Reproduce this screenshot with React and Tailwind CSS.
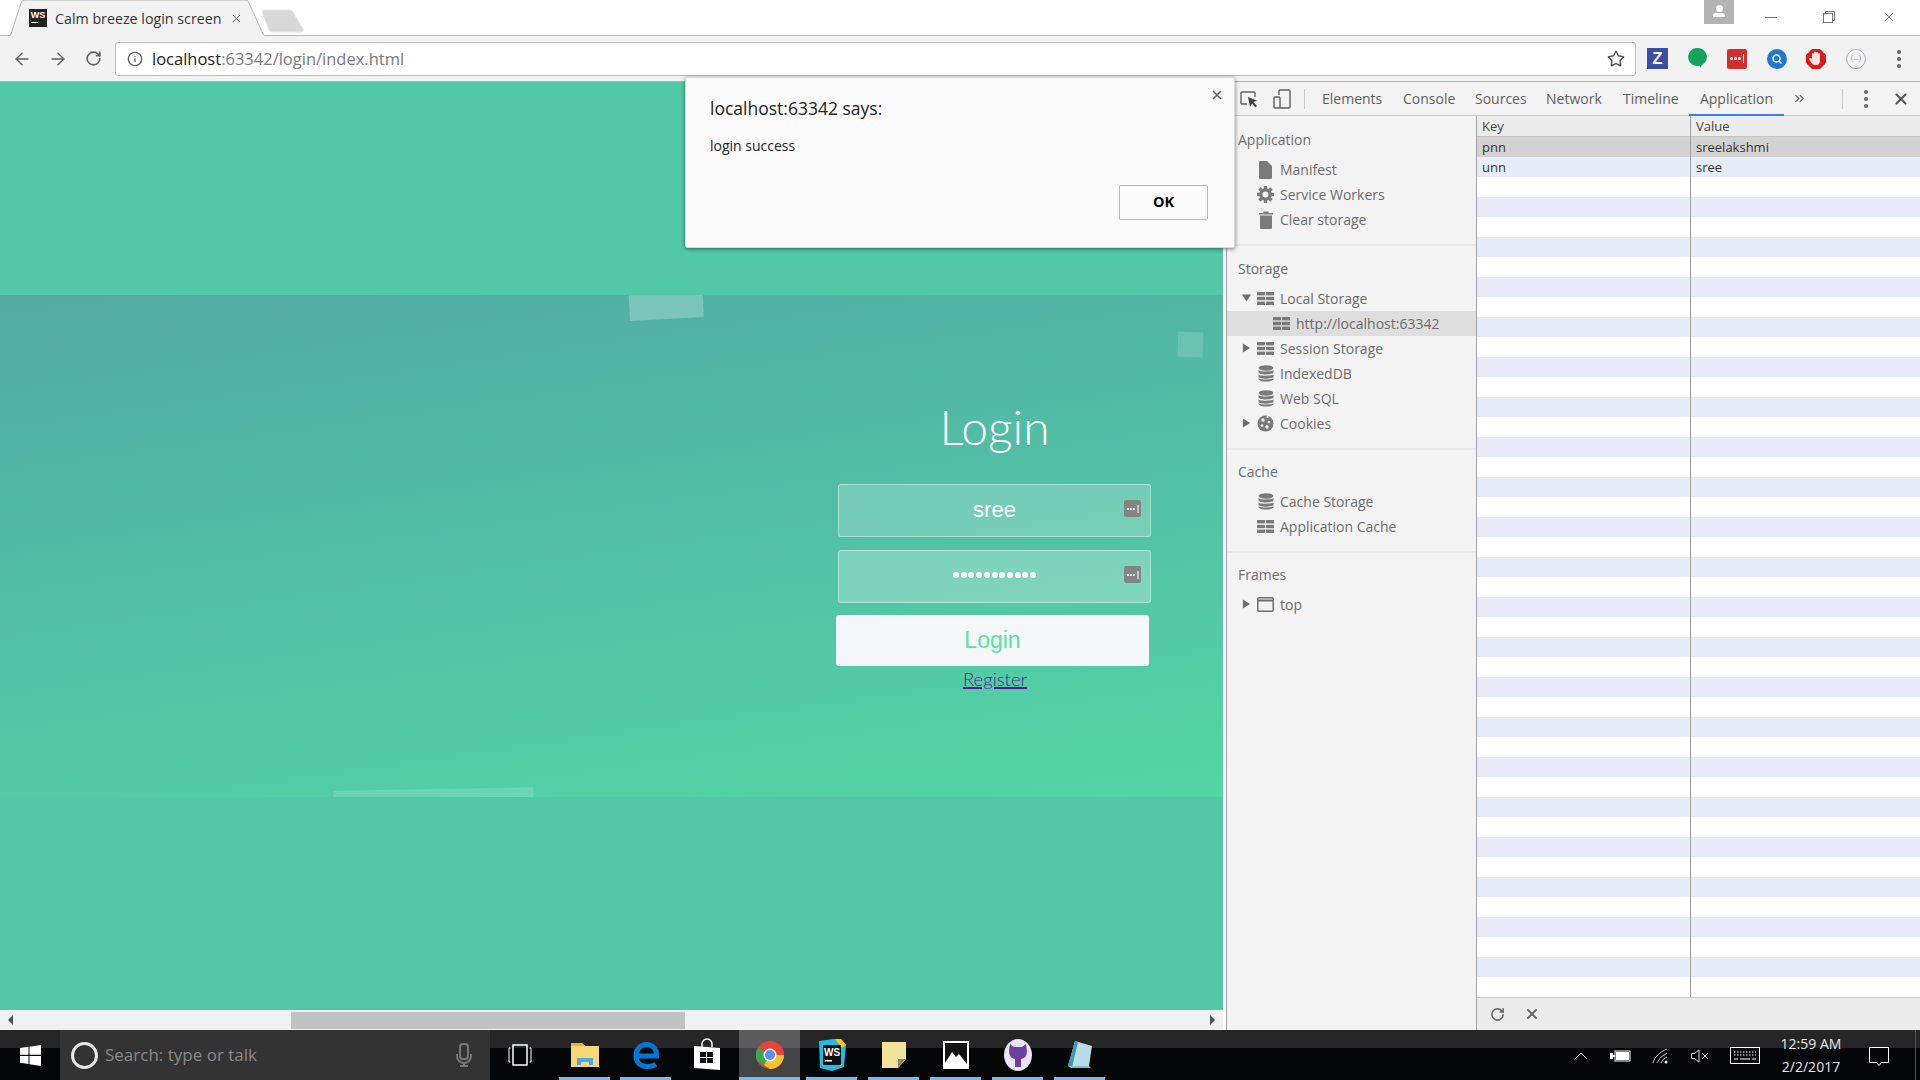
import { ArrowLeft, ArrowRight, RotateCw, Info, Star, X, ChevronsRight, ChevronUp } from "lucide-react";

const Tri = ({ open }) => (
  <svg width="9" height="10" viewBox="0 0 10 10" className="absolute left-[15px] top-[7px]">
    {open ? <path d="M0 1h10L5 9z" fill="#6e6e6e" /> : <path d="M1 0l8 5-8 5z" fill="#6e6e6e" />}
  </svg>
);

const GridIcon = () => (
  <svg width="17" height="13" viewBox="0 0 17 13" fill="#7a7a7a">
    <rect x="0" y="0" width="8" height="3.4" />
    <rect x="9" y="0" width="8" height="3.4" />
    <rect x="0" y="4.8" width="8" height="3.4" />
    <rect x="9" y="4.8" width="8" height="3.4" />
    <rect x="0" y="9.6" width="8" height="3.4" />
    <rect x="9" y="9.6" width="8" height="3.4" />
  </svg>
);

const DbIcon = () => (
  <svg width="16" height="17" viewBox="0 0 16 17" fill="#7a7a7a">
    <ellipse cx="8" cy="3" rx="7.5" ry="2.8" />
    <path d="M.5 5c1 2 14 2 15 0v2.2c0 3-15 3-15 0zM.5 9.2c1 2 14 2 15 0v2.2c0 3-15 3-15 0zM.5 13c1 2 14 2 15 0v1c0 3.400-15 3.400-15 0z" />
  </svg>
);

const DocIcon = () => (
  <svg width="13" height="18" viewBox="0 0 13 18" fill="#7a7a7a">
    <path d="M0 1a1 1 0 011-1h7l5 5v12a1 1 0 01-1 1H1a1 1 0 01-1-1z" />
  </svg>
);

const GearIcon = () => (
  <svg width="17" height="17" viewBox="0 0 17 17">
    <circle cx="8.500" cy="8.500" r="4.600" fill="none" stroke="#7a7a7a" strokeWidth="3.200" />
    <g stroke="#7a7a7a" strokeWidth="3.400">
      <path d="M8.500 0v3M8.500 14v3M0 8.500h3M14 8.500h3M2.500 2.500l2 2M12.500 12.500l2 2M14.500 2.500l-2 2M4.500 12.500l-2 2" />
    </g>
  </svg>
);

const TrashIcon = () => (
  <svg width="14" height="18" viewBox="0 0 14 18" fill="#7a7a7a">
    <path d="M0 2h4.500V.5h5V2H14v1.500H0zM1 4.500h12V17a1 1 0 01-1 1H2a1 1 0 01-1-1z" />
  </svg>
);

const CookieIcon = () => (
  <svg width="17" height="17" viewBox="0 0 17 17">
    <circle cx="8.500" cy="8.500" r="8" fill="#7a7a7a" />
    <g fill="#f3f3f3">
      <circle cx="6" cy="5" r="1.700" />
      <circle cx="12" cy="7" r="1.300" />
      <circle cx="5" cy="10.500" r="1.300" />
      <circle cx="10" cy="12" r="1.700" />
      <circle cx="10.500" cy="2" r="1.100" />
    </g>
  </svg>
);

const FrameIcon = () => (
  <svg width="17" height="15" viewBox="0 0 17 15" fill="none" stroke="#6e6e6e" strokeWidth="1.500">
    <rect x=".8" y=".8" width="15.400" height="13.400" rx="1" />
    <path d="M.8 3.500h15.400" strokeWidth="2" />
  </svg>
);

const KeyIcon = () => (
  <div className="absolute right-[9px] top-[15px] w-[17px] h-[17px] rounded-[2px] bg-[#848484] flex items-center justify-center">
    <svg width="14" height="10" viewBox="0 0 14 10" fill="#fff">
      <circle cx="2" cy="5" r="1" />
      <circle cx="5" cy="5" r="1" />
      <circle cx="8" cy="5" r="1" />
      <rect x="11.500" y="1" width="1" height="8" />
    </svg>
  </div>
);

const sideGroups = [
  {
    title: "Application",
    spacing: "border-b-2 border-[#e8e8e8] pb-[12px] mb-[10px]",
    items: [
      { icon: <DocIcon />, label: "Manifest" },
      { icon: <GearIcon />, label: "Service Workers" },
      { icon: <TrashIcon />, label: "Clear storage" },
    ],
  },
  {
    title: "Storage",
    spacing: "border-b-2 border-[#e8e8e8] pb-[12px] mb-[9px]",
    items: [
      { icon: <GridIcon />, label: "Local Storage", tri: "open" },
      { icon: <GridIcon />, label: "http://localhost:63342", active: true },
      { icon: <GridIcon />, label: "Session Storage", tri: "closed" },
      { icon: <DbIcon />, label: "IndexedDB" },
      { icon: <DbIcon />, label: "Web SQL" },
      { icon: <CookieIcon />, label: "Cookies", tri: "closed" },
    ],
  },
  {
    title: "Cache",
    spacing: "border-b-2 border-[#e8e8e8] pb-[12px] mb-[9px]",
    items: [
      { icon: <DbIcon />, label: "Cache Storage" },
      { icon: <GridIcon />, label: "Application Cache" },
    ],
  },
  {
    title: "Frames",
    spacing: "",
    items: [{ icon: <FrameIcon />, label: "top", tri: "closed" }],
  },
];

const devTabs = [
  { label: "Elements", width: "w-[81px]" },
  { label: "Console", width: "w-[72px]" },
  { label: "Sources", width: "w-[71px]" },
  { label: "Network", width: "w-[77px]" },
  { label: "Timeline", width: "w-[66px]" },
];

const storageRows = Array.from({ length: 43 }, (_, i) => i);

const SideRow = ({ item }) => (
  <div
    className={
      item.active
        ? "relative h-[25px] flex items-center pl-[46px] bg-[#dedede]"
        : "relative h-[25px] flex items-center pl-[30px]"
    }
  >
    {item.tri === "open" && <Tri open />}
    {item.tri === "closed" && <Tri />}
    <span className="w-[17px] flex justify-center shrink-0">{item.icon}</span>
    <span className="ml-[6px] text-[14px] text-[#6b6b6b] whitespace-nowrap">{item.label}</span>
  </div>
);

const Sidebar = () => (
  <div className="w-[250px] shrink-0 bg-[#f3f3f3] border-r border-[#a3a3a3] flex flex-col pt-[11px]">
    {sideGroups.map((g) => (
      <div key={g.title} className={g.spacing}>
        <div className="h-[25px] flex items-center pl-[11px] text-[14px] text-[#6b6b6b]">{g.title}</div>
        <div className="mt-[5px]">
          {g.items.map((item) => (
            <SideRow key={item.label} item={item} />
          ))}
        </div>
      </div>
    ))}
  </div>
);

const StorageTable = () => (
  <div className="flex-1 flex flex-col min-w-0">
    <div className="flex-1 overflow-hidden flex flex-col relative">
      <div className="h-[21px] shrink-0 bg-[#ececec] border-b border-[#c4c4c4] flex text-[13px] text-[#444]">
        <div className="w-[213px] pl-[5px] pt-[1px] flex items-center">Key</div>
        <div className="pl-[6px] pt-[1px] flex items-center">Value</div>
      </div>
      {storageRows.map((i) => (
        <div
          key={i}
          className={
            i === 0
              ? "h-[20px] shrink-0 bg-[#d3d3d3] flex text-[13px] text-[#333]"
              : i % 2 === 1
                ? "h-[20px] shrink-0 bg-[#e6edf8] flex text-[13px] text-[#333]"
                : "h-[20px] shrink-0 bg-white flex text-[13px] text-[#333]"
          }
        >
          <div className="w-[213px] pl-[5px] pt-[1px] flex items-center">{i === 0 ? "pnn" : i === 1 ? "unn" : ""}</div>
          <div className="pl-[6px] pt-[1px] flex items-center">{i === 0 ? "sreelakshmi" : i === 1 ? "sree" : ""}</div>
        </div>
      ))}
      <div className="absolute left-[213px] top-0 bottom-0 w-px bg-[#9c9c9c]" />
    </div>
    <div className="h-[33px] shrink-0 bg-[#ececec] border-t border-[#c8c8c8] flex items-center pl-[13px] gap-[19px] text-[#666]">
      <RotateCw size={15} strokeWidth={2.500} />
      <X size={16} strokeWidth={2.800} />
    </div>
  </div>
);

const DevTools = () => (
  <div className="w-[695px] shrink-0 ml-[3px] flex flex-col border-l border-[#a3a3a3] bg-white">
    <div className="h-[34px] shrink-0 bg-[#f3f3f3] border-b border-[#c8c8c8] flex items-center relative text-[14px] text-[#5f5f5f]">
      <svg width="18" height="18" viewBox="0 0 18 18" fill="none" className="ml-[13px]">
        <path d="M7 14H2a1 1 0 01-1-1V3a1 1 0 011-1h12a1 1 0 011 1v4" stroke="#5f5f5f" strokeWidth="1.400" />
        <path d="M8 7l9 3.500-3.500 1.500L17 16l-1.500 1.500L12 13.500 10 17z" fill="#444" />
      </svg>
      <svg width="18" height="20" viewBox="0 0 18 20" fill="none" stroke="#5f5f5f" strokeWidth="1.400" className="ml-[15px]">
        <path d="M6 6V2a1 1 0 011-1h9a1 1 0 011 1v16a1 1 0 01-1 1H7" />
        <rect x="1" y="8" width="6" height="11" rx="1" />
      </svg>
      <div className="w-px h-[20px] bg-[#c8c8c8] ml-[13px]" />
      <div className="ml-[17px] flex items-center h-full">
        {devTabs.map((t) => (
          <span key={t.label} className={t.width + " whitespace-nowrap"}>{t.label}</span>
        ))}
        <span className="relative w-[95px] h-full flex items-center justify-center whitespace-nowrap">
          Application
          <span className="absolute left-0 right-0 bottom-[-1px] h-[2px] bg-[#3b80ee]" />
        </span>
      </div>
      <ChevronsRight size={15} strokeWidth={2.200} className="ml-[8px] text-[#666]" />
      <div className="w-px h-[20px] bg-[#c8c8c8] ml-[35px]" />
      <div className="ml-[21px] flex flex-col gap-[3px]">
        <span className="w-[4px] h-[4px] rounded-full bg-[#666]" />
        <span className="w-[4px] h-[4px] rounded-full bg-[#666]" />
        <span className="w-[4px] h-[4px] rounded-full bg-[#666]" />
      </div>
      <X size={18} strokeWidth={2.800} className="ml-[24px] text-[#555]" />
    </div>
    <div className="flex-1 flex min-h-0">
      <Sidebar />
      <StorageTable />
    </div>
  </div>
);

const LoginForm = () => (
  <div className="ml-[836px] w-[316px] flex flex-col pt-[99px]">
    <h1 className="h-[66px] text-center pl-[1px] text-[48px] leading-[66px] font-light text-white font-['Lato',sans-serif]">Login</h1>
    <div className="mt-[24px] ml-[2px] relative w-[313px] h-[53px] rounded-[3px] border border-white/40 bg-white/20 flex items-center justify-center pb-[2px] text-[22px] text-white font-['Liberation_Sans',sans-serif]">
      sree
      <KeyIcon />
    </div>
    <div className="mt-[13px] ml-[2px] relative w-[313px] h-[53px] rounded-[3px] border border-white/40 bg-white/25 flex items-center justify-center gap-[1.700px] pb-[3px]">
      {Array.from({ length: 11 }, (_, i) => (
        <span key={i} className="w-[6px] h-[6px] rounded-full bg-white" />
      ))}
      <KeyIcon />
    </div>
    <div className="mt-[12px] w-[313px] h-[51px] rounded-[3px] bg-[#f5f7f9] flex items-center justify-center text-[23px] text-[#53e3a6] font-['Liberation_Sans',sans-serif]">Login</div>
    <div className="pl-[2px] text-center text-[18.500px] leading-[26px] font-light font-['Lato',sans-serif]">
      <a className="text-[#551a8b] underline decoration-2">Register</a>
    </div>
  </div>
);

const Page = () => (
  <div className="w-[1223px] shrink-0 flex flex-col">
    <div className="h-[213px] shrink-0 bg-[#52c9a6]" />
    <div className="h-[502px] shrink-0 relative overflow-hidden bg-[linear-gradient(172deg,#51aaa4,#53d6a4)]">
      <div className="absolute left-[628px] top-[-50px] w-[74px] h-[74px] bg-white/25 -rotate-3" />
      <div className="absolute left-[1178px] top-[37px] w-[25px] h-[25px] bg-white/15 rotate-2" />
      <div className="absolute left-[335px] top-[494px] w-[200px] h-[200px] bg-white/15 -rotate-1" />
      <LoginForm />
    </div>
    <div className="flex-1 bg-[#52c9a6]" />
    <div className="h-[20px] shrink-0 bg-[#f1f1f1] flex items-center relative">
      <svg width="6" height="10" viewBox="0 0 6 10" className="absolute left-[8px] top-[5px]">
        <path d="M5 0v10L0 5z" fill="#505050" />
      </svg>
      <div className="absolute left-[291px] w-[394px] top-[2px] bottom-[1px] bg-[#c1c1c1]" />
      <svg width="6" height="10" viewBox="0 0 6 10" className="absolute right-[8px] top-[5px]">
        <path d="M1 0v10l5-5z" fill="#505050" />
      </svg>
    </div>
  </div>
);

const Dialog = () => (
  <div className="absolute left-[685px] top-[77px] w-[550px] h-[171px] bg-[#fbfbfb] rounded-[2px] shadow-[0_1px_4px_rgba(0,0,0,0.5)] border border-[#d8d8d8] z-10 font-['Open_Sans',sans-serif]">
    <X size={14} strokeWidth={2.800} className="absolute right-[10px] top-[10px] text-[#666]" />
    <div className="pl-[24px] pt-[18px] text-[17.500px] leading-[24px] text-[#222]">localhost:63342 says:</div>
    <div className="pl-[24px] pt-[16px] text-[14px] leading-[20px] text-[#222]">login success</div>
    <div className="absolute left-[433px] top-[107px] w-[89px] h-[35px] bg-[#fbfbfb] border border-[#a3b8e8] rounded-[1px] flex items-center justify-center pb-[1px] text-[14.500px] font-bold text-black">OK</div>
  </div>
);

const TabStrip = () => (
  <div className="h-[36px] shrink-0 bg-white flex relative border-b border-[#b5b5b5]">
    <div className="relative w-[262px] h-[36px] ml-[6px] flex items-center shrink-0">
      <svg width="262" height="36" viewBox="0 0 262 36" className="absolute inset-0">
        <path d="M2 36h1q1 0 2-2L15 3q1-3 4-3h220q3 0 4 3l14 31q1 2 3 2h2" fill="#f2f2f2" stroke="#b5b5b5" />
      </svg>
      <div className="relative ml-[23px] w-[18px] h-[18px] bg-[#222] flex flex-col items-center pt-[1px]">
        <span className="text-[9px] leading-[10px] font-bold text-white font-['Liberation_Sans',sans-serif]">WS</span>
        <span className="self-start ml-[2px] mt-[2px] w-[7px] h-[1px] bg-white" />
      </div>
      <span className="relative ml-[8px] pt-[1px] text-[14.250px] text-[#333] whitespace-nowrap">Calm breeze login screen</span>
      <X size={13} strokeWidth={1.800} className="relative ml-[9px] text-[#555]" />
    </div>
    <svg width="44" height="24" viewBox="0 0 44 24" className="mt-[9px] -ml-[7px]">
      <path d="M1 3q0-2 2-2h26q2 0 3 2l10 17q1 3-2 3H11q-2 0-3-2z" fill="#d8d8d8" stroke="#e6e6e6" />
    </svg>
    <div className="absolute left-[1704px] top-0 w-[30px] h-[24px] bg-[#b3b3b3] flex flex-col items-center pt-[5px]">
      <span className="w-[7px] h-[7px] rounded-full bg-white" />
      <span className="w-[12px] h-[4px] rounded-t-[3px] bg-white mt-[1px]" />
    </div>
    <div className="ml-auto flex items-center h-[34px] text-[#888] mr-[23px] gap-[46px]">
      <span className="w-[12px] h-px bg-[#777]" />
      <svg width="12" height="12" viewBox="0 0 12 12" fill="none" stroke="#777">
        <rect x=".5" y="2.500" width="9" height="9" />
        <path d="M2.500 2.500V.5h9v9h-2" />
      </svg>
      <X size={16} strokeWidth={1} className="text-[#555]" />
    </div>
  </div>
);

const Extensions = () => (
  <div className="flex items-center ml-[11px]">
    <div className="w-[21px] h-[21px] bg-[#3b4ea0] flex items-center justify-center text-white font-bold text-[17px] leading-none font-['Liberation_Sans',sans-serif]">Z</div>
    <svg width="20" height="22" viewBox="0 0 20 22" className="ml-[20px]">
      <path d="M10 0a9 9 0 014 17l-2 3v-2.500A9 9 0 1110 0z" fill="#12a35d" />
    </svg>
    <div className="ml-[19px] w-[20px] h-[20px] rounded-[2px] bg-[#d32d2d] flex items-center justify-center gap-[1px]">
      <span className="w-[3px] h-[3px] rounded-full bg-white" />
      <span className="w-[3px] h-[3px] rounded-full bg-white" />
      <span className="w-[3px] h-[3px] rounded-full bg-white" />
      <span className="w-px h-[9px] bg-white ml-[1px]" />
    </div>
    <svg width="20" height="20" viewBox="0 0 20 20" className="ml-[20px]">
      <circle cx="10" cy="10" r="10" fill="#1f78d1" />
      <circle cx="9.500" cy="9.500" r="3.500" fill="none" stroke="#fff" strokeWidth="1.500" />
      <path d="M12 12l2.500 2.500" stroke="#fff" strokeWidth="1.500" />
    </svg>
    <svg width="20" height="20" viewBox="0 0 20 20" className="ml-[19px]">
      <path d="M6 0h8l6 6v8l-6 6H6l-6-6V6z" fill="#e01b1b" />
      <path d="M6 10V5a1 1 0 012 0V3.500a1 1 0 012 0V4a1 1 0 012 0v1a1 1 0 012 0v7q0 4-4 4t-5-3l-2-3q0-1.500 2-1z" fill="#f3e9e4" />
    </svg>
    <div className="ml-[20px] w-[20px] h-[20px] rounded-full border border-[#aaa] flex items-center justify-center text-[7px] text-[#999]">{"{...}"}</div>
    <div className="ml-[31px] flex flex-col gap-[3px]">
      <span className="w-[4px] h-[4px] rounded-full bg-[#666]" />
      <span className="w-[4px] h-[4px] rounded-full bg-[#666]" />
      <span className="w-[4px] h-[4px] rounded-full bg-[#666]" />
    </div>
  </div>
);

const Toolbar = () => (
  <div className="h-[46px] shrink-0 bg-[#f2f2f2] border-b border-[#b5b5b5] flex items-center">
    <ArrowLeft size={20} strokeWidth={1.800} className="ml-[12px] text-[#5f5f5f]" />
    <ArrowRight size={20} strokeWidth={1.800} className="ml-[16px] text-[#5f5f5f]" />
    <RotateCw size={17} strokeWidth={2.200} className="ml-[17px] text-[#5f5f5f]" />
    <div className="ml-[13px] w-[1521px] h-[34px] bg-white border border-[#bcbcbc] rounded-[3px] flex items-center pl-[11px] pr-[10px]">
      <Info size={16} strokeWidth={2} className="text-[#5f5f5f]" />
      <span className="ml-[9px] pt-[1px] text-[16.500px] text-[#222] whitespace-nowrap">
        localhost<span className="text-[#7a7a7a]">:63342/login/index.html</span>
      </span>
      <Star size={18} strokeWidth={2} className="ml-auto text-[#555]" />
    </div>
    <Extensions />
  </div>
);

const TaskIcon = ({ children, className }) => (
  <div className={"relative h-full flex items-center justify-center shrink-0 " + className}>
    {children}
    <span className="absolute left-0 right-0 bottom-0 h-[3px] bg-[#76b9ed]" />
  </div>
);

const Taskbar = () => (
  <div className="h-[50px] shrink-0 bg-[linear-gradient(#262626_0,#262626_18px,#050608_18px)] flex items-center text-white">
    <div className="w-[60px] h-full flex items-center justify-center">
      <svg width="21" height="21" viewBox="0 0 21 21" fill="#fff">
        <path d="M0 3l8.500-1.200v8H0zM9.500 1.700L21 0v9.800H9.500zM0 11h8.500v8L0 17.800zM9.500 11H21v10l-11.500-1.700z" />
      </svg>
    </div>
    <div className="w-[430px] h-full bg-[#333] flex items-center shrink-0">
      <span className="ml-[11px] w-[27px] h-[27px] rounded-full border-[3px] border-[#e6e6e6]" />
      <span className="ml-[7px] text-[17px] text-[#8a8a8a] whitespace-nowrap">Search: type or talk</span>
      <svg width="16" height="24" viewBox="0 0 16 24" fill="none" stroke="#777" strokeWidth="2" className="ml-auto mr-[18px]">
        <rect x="4" y="1" width="8" height="15" rx="3" />
        <path d="M1 11v2a7 7 0 0014 0v-2M8 20v3M4 23h8" />
      </svg>
    </div>
    <div className="w-[60px] flex items-center justify-center">
      <svg width="24" height="22" viewBox="0 0 24 22" fill="none" stroke="#fff" strokeWidth="1.500">
        <rect x="5" y="1" width="14" height="20" />
        <path d="M2.500 4H1v14h1.500M21.500 4H23v14h-1.500" strokeWidth="1" />
      </svg>
    </div>
    <TaskIcon className="w-[51px] ml-[9px]">
      <svg width="30" height="28" viewBox="0 0 30 28">
        <path d="M1 2h11l3 3h14v21H1z" fill="#f8d775" />
        <path d="M1 2h11l3 3H1z" fill="#e2b342" />
        <path d="M7 24v-7h16v7h-4v-3h-8v3z" fill="#4aa8e8" />
      </svg>
    </TaskIcon>
    <TaskIcon className="w-[51px] ml-[10px]">
      <svg width="26" height="27" viewBox="0 0 26 27" fill="none" stroke="#0078d7" strokeWidth="5">
        <path d="M3 14h20.500c.5-7-4-11.500-10-11.500C7 2.500 2.500 8 3 15c.5 6 5 9.500 11 9.500 3 0 6-.5 9-2" />
      </svg>
    </TaskIcon>
    <div className="w-[68px] h-full flex items-center justify-center shrink-0 pl-[4px]">
      <svg width="26" height="34" viewBox="0 0 26 34">
        <path d="M8 9V6a5 5 0 0110 0v3" fill="none" stroke="#fff" strokeWidth="1.500" />
        <path d="M0 8l26 2v22L0 30z" fill="#fff" />
        <path d="M6 14h6v5H6zM13 14h6v5h-6zM6 20h6v5H6zM13 20h6v5h-6z" fill="#111" />
      </svg>
    </div>
    <TaskIcon className="w-[61px] bg-white/25">
      <svg width="28" height="28" viewBox="0 0 28 28">
        <circle cx="14" cy="14" r="14" fill="#ea4335" />
        <path d="M14 14L2 7a14 14 0 00-1 13l13 8z" fill="#34a853" />
        <path d="M14 14h14a14 14 0 01-14 14l-6-4z" fill="#fbc02d" />
        <circle cx="14" cy="14" r="6.500" fill="#fff" />
        <circle cx="14" cy="14" r="5" fill="#5a8fe8" />
      </svg>
    </TaskIcon>
    <TaskIcon className="w-[51px] ml-[6px]">
      <svg width="30" height="34" viewBox="0 0 30 34">
        <path d="M2 3l14-2 8 0 5 6-2 22-12 4-12-3z" fill="#21bde0" />
        <path d="M18 1l6 0 5 6-4 3z" fill="#f5c518" />
        <rect x="6" y="7" width="18" height="20" fill="#111" />
        <text x="15" y="18" textAnchor="middle" fontSize="10" fontWeight="700" fill="#fff" fontFamily="Liberation Sans">WS</text>
        <rect x="8" y="22" width="7" height="1.500" fill="#fff" />
      </svg>
    </TaskIcon>
    <TaskIcon className="w-[51px] ml-[11px]">
      <svg width="24" height="26" viewBox="0 0 24 26">
        <path d="M0 0h24v17l-8 9H0z" fill="#f2e39b" />
        <path d="M24 17h-8v9z" fill="#8f8760" />
      </svg>
    </TaskIcon>
    <TaskIcon className="w-[51px] ml-[11px]">
      <svg width="26" height="28" viewBox="0 0 26 28">
        <rect x="1" y="1" width="24" height="26" fill="#111" stroke="#fff" strokeWidth="2" />
        <path d="M2 22l7-11 4 5 3-3 8 10v4H2z" fill="#fff" />
      </svg>
    </TaskIcon>
    <TaskIcon className="w-[51px] ml-[11px]">
      <svg width="28" height="32" viewBox="0 0 28 32">
        <ellipse cx="14" cy="16" rx="14" ry="16" fill="#e9e5f3" />
        <path d="M6 5l4 3h8l4-3 1 7q0 7-6 8v8h-6v-8q-6-1-6-8z" fill="#6a3fa0" />
      </svg>
    </TaskIcon>
    <TaskIcon className="w-[51px] ml-[11px]">
      <svg width="28" height="32" viewBox="0 0 28 32">
        <path d="M9 2l17 5-3 20H2z" fill="#b9dde6" />
        <path d="M2 27l7-25 3 1-6 25z" fill="#3f98ad" />
        <path d="M2 27h21l2 2H5z" fill="#7bbfcc" />
      </svg>
    </TaskIcon>
    <div className="ml-auto flex items-center h-full relative">
      <ChevronUp size={24} strokeWidth={1} className="mt-[2px]" />
      <svg width="21" height="12" viewBox="0 0 21 12" fill="#fff" className="ml-[17px] mt-[2px]">
        <path d="M0 3h3v2h2v2H3v2H0z" />
        <rect x="5" y="1" width="15" height="10" fill="none" stroke="#fff" />
        <rect x="6" y="2" width="13" height="8" />
      </svg>
      <svg width="18" height="16" viewBox="0 0 18 16" fill="none" stroke="#bbb" className="ml-[21px] mt-[2px]">
        <path d="M1 15Q3 6 15 1M5 15Q7 9 15 5M9 15q1-4 6-6" />
        <circle cx="14" cy="14" r="1.500" fill="#fff" stroke="none" />
      </svg>
      <svg width="19" height="14" viewBox="0 0 19 14" fill="none" stroke="#ddd" className="ml-[21px] mt-[2px]">
        <path d="M.5 4.500h3L8 1v12L3.500 9.500h-3zM11 4l6 6M17 4l-6 6" />
      </svg>
      <svg width="30" height="17" viewBox="0 0 30 17" fill="none" stroke="#fff" className="ml-[20px] mt-[1px]">
        <rect x=".5" y=".5" width="29" height="16" />
        <path d="M4 5h22M4 8h22" strokeDasharray="1.500 1.500" />
        <path d="M4 12h4M10 12h10M22 12h4" />
      </svg>
      <div className="w-[64px] ml-[19px] flex flex-col items-center text-[14px] leading-[23px] text-[#e8e8e8] whitespace-nowrap">
        <span>12:59 AM</span>
        <span>2/2/2017</span>
      </div>
      <svg width="20" height="20" viewBox="0 0 20 20" fill="none" stroke="#fff" className="ml-[26px] mr-[31px] mt-[3px]">
        <path d="M.5.5h19v15h-7l-2.500 3-2.500-3h-7z" />
      </svg>
      <span className="absolute right-[4px] top-0 bottom-0 w-px bg-[#555]" />
    </div>
  </div>
);

export default function App() {
  return (
    <div className="relative w-[1920px] h-[1080px] overflow-hidden flex flex-col bg-white font-['Open_Sans',sans-serif]">
      <TabStrip />
      <Toolbar />
      <div className="flex-1 flex min-h-0">
        <Page />
        <DevTools />
      </div>
      <Taskbar />
      <Dialog />
    </div>
  );
}
